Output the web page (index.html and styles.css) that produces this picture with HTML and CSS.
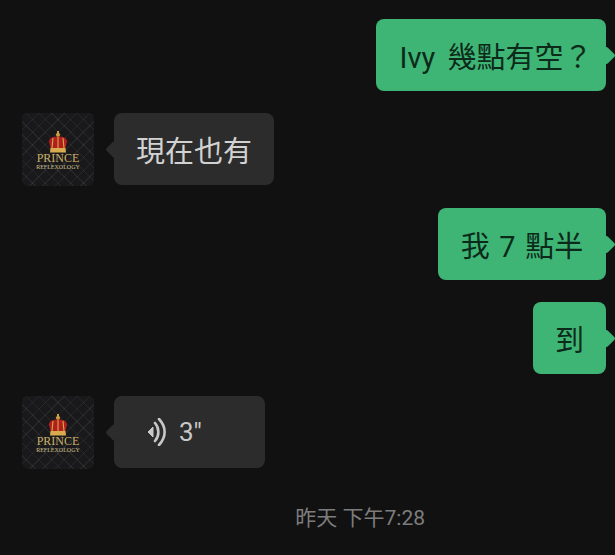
FILE: index.html
```html
<!DOCTYPE html>
<html lang="zh-Hant">
<head>
    <meta charset="UTF-8">
    <meta name="viewport" content="width=device-width, initial-scale=1.0">
    <title>聊天</title>
    <link rel="stylesheet" href="styles.css">
</head>
<body>

<div class="chat">
    <div class="row mine">
        <div class="bubble green first">Ivy 幾點有空？</div>
    </div>

    <div class="row theirs">
        <div class="avatar">
            <svg class="crown" viewBox="0 0 20 22">
                <path d="M9 0h2v2l1.200 1.500L11 6.500H9L7.800 3.500 9 2z" fill="#c99f45"/>
                <path d="M1 11C1 6 6 5.500 10 5.500S19 6 19 11l-1.500 6h-15z" fill="#b01f1c"/>
                <path d="M10 6v11M5 7l-1 10M15 7l1 10" stroke="#d9a94c" stroke-width="1.100" fill="none"/>
                <path d="M2.500 17h15l.500 4.500H2z" fill="#d8ab4e"/>
            </svg>
            <span class="brand">PRINCE</span>
            <span class="brand-sub">REFLEXOLOGY</span>
        </div>
        <div class="bubble grey">現在也有</div>
    </div>

    <div class="row mine">
        <div class="bubble green second">我 7 點半</div>
    </div>

    <div class="row mine">
        <div class="bubble green third">到</div>
    </div>

    <div class="row theirs">
        <div class="avatar">
            <svg class="crown" viewBox="0 0 20 22">
                <path d="M9 0h2v2l1.200 1.500L11 6.500H9L7.800 3.500 9 2z" fill="#c99f45"/>
                <path d="M1 11C1 6 6 5.500 10 5.500S19 6 19 11l-1.500 6h-15z" fill="#b01f1c"/>
                <path d="M10 6v11M5 7l-1 10M15 7l1 10" stroke="#d9a94c" stroke-width="1.100" fill="none"/>
                <path d="M2.500 17h15l.500 4.500H2z" fill="#d8ab4e"/>
            </svg>
            <span class="brand">PRINCE</span>
            <span class="brand-sub">REFLEXOLOGY</span>
        </div>
        <div class="bubble grey voice">
            <svg class="wave" viewBox="0 0 20 28">
                <path d="M0 14l5-5v10z" fill="#c8c8c8" stroke="#c8c8c8" stroke-linejoin="round"/>
                <path d="M7 5c4.500 5 4.500 13 0 18M11 1c7.500 8 7.500 18 0 26" stroke="#c8c8c8" stroke-width="2.600" stroke-linecap="round" fill="none"/>
            </svg>
            <span>3"</span>
        </div>
    </div>

    <div class="time">昨天 下午7:28</div>
</div>

</body>
</html>
```

FILE: styles.css
```css
body {
    margin: 0;
    background-color: #111111;
    font-family: Roboto, "Noto Sans CJK TC", sans-serif;
}
.chat {
    display: flex;
    flex-direction: column;
    gap: 22px;
    height: 555px;
    padding: 19px 9px 0 22px;
    box-sizing: border-box;
    overflow: hidden;
}
.row {
    display: flex;
    align-items: flex-start;
}
.mine {
    justify-content: flex-end;
}
.theirs {
    gap: 20px;
}
.bubble {
    position: relative;
    display: flex;
    align-items: center;
    justify-content: center;
    height: 72px;
    border-radius: 8px;
    font-size: 29px;
    white-space: nowrap;
}
.bubble::after {
    content: "";
    position: absolute;
    top: 30px;
    width: 13px;
    height: 13px;
    transform: rotate(45deg);
    border-radius: 2px;
}
.green {
    background-color: #3eb575;
    color: #0c2a1a;
}
.green::after {
    right: -6.5px;
    background-color: #3eb575;
}
.grey {
    background-color: #2c2c2c;
    color: #d2d2d2;
}
.grey::after {
    left: -6.5px;
    background-color: #2c2c2c;
}
.first {
    width: 230px;
    padding-left: 10px;
    box-sizing: border-box;
    word-spacing: 5px;
}
.second {
    width: 168px;
    word-spacing: 2.5px;
}
.third {
    width: 73px;
}
.theirs .grey {
    width: 160px;
}
.theirs .voice {
    width: 151px;
    justify-content: flex-start;
    gap: 11px;
    padding-left: 34px;
    box-sizing: border-box;
    font-size: 26px;
    color: #c8c8c8;
}
.wave {
    width: 20px;
    height: 28px;
}
.avatar {
    display: flex;
    flex-direction: column;
    align-items: center;
    width: 72px;
    height: 73px;
    padding-top: 18px;
    box-sizing: border-box;
    flex-shrink: 0;
    border-radius: 6px;
    background-color: #19181a;
    background-image:
        repeating-linear-gradient(45deg, rgba(255, 255, 255, 0.06) 0 1px, transparent 1px 9px),
        repeating-linear-gradient(-45deg, rgba(255, 255, 255, 0.06) 0 1px, transparent 1px 9px);
}
.crown {
    width: 20px;
    height: 22px;
    flex-shrink: 0;
}
.brand {
    font-family: "Liberation Serif", serif;
    font-size: 12px;
    line-height: 11px;
    color: #c9b06a;
}
.brand-sub {
    font-family: "Liberation Serif", serif;
    font-size: 6px;
    line-height: 6px;
    color: #d0c090;
}
.time {
    align-self: flex-end;
    margin: 12px 181px 0 0;
    font-size: 21px;
    line-height: 30px;
    color: #7d7d7d;
}
```
